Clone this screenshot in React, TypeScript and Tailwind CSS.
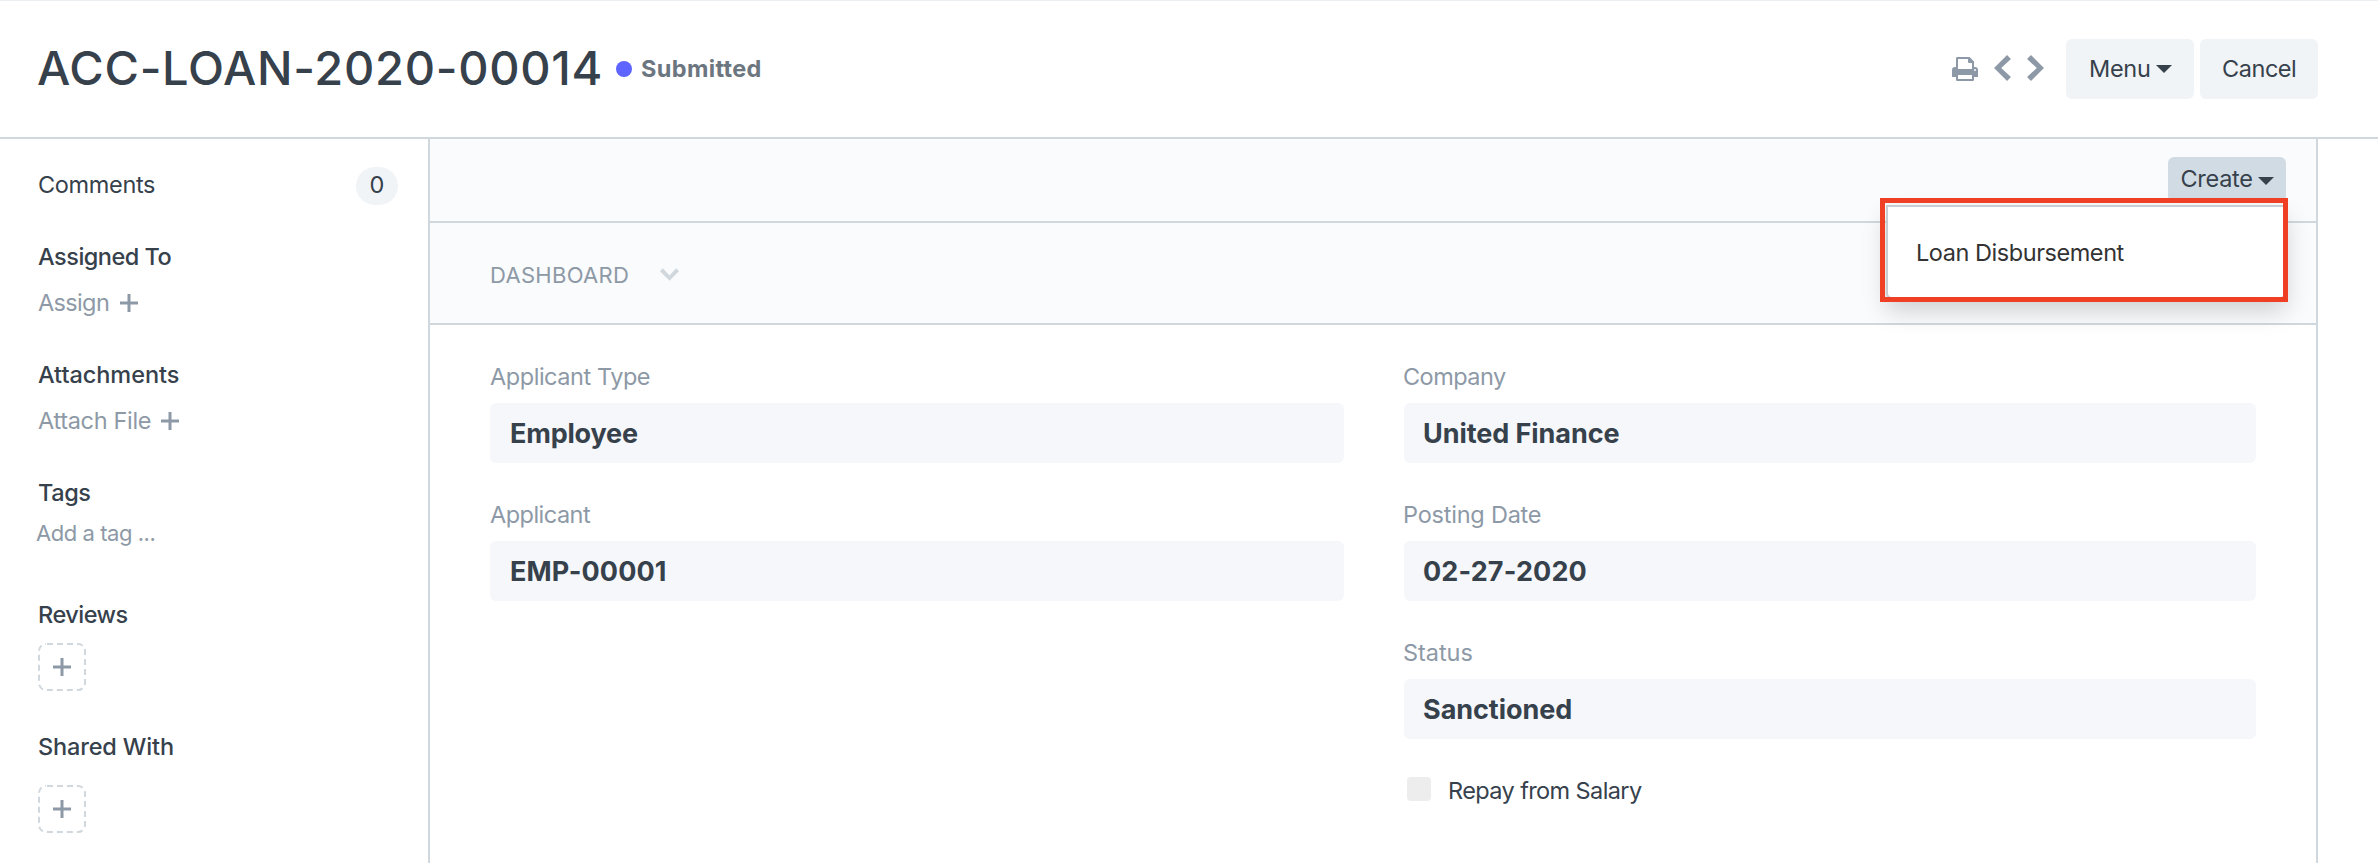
import type { ReactNode } from "react";

function Caret({ className = "" }: { className?: string }) {
  return (
    <svg className={`shrink-0 ${className}`} width="16" height="8" viewBox="0 0 16 8" fill="currentColor">
      <path d="M0 0h16L8 8z" />
    </svg>
  );
}

function Plus({ className = "" }: { className?: string }) {
  return (
    <svg className={`shrink-0 text-[#8d99a6] ${className}`} width="18" height="18" viewBox="0 0 18 18" fill="currentColor">
      <path d="M7.5 0h3v7.5H18v3h-7.5V18h-3v-7.5H0v-3h7.5z" />
    </svg>
  );
}

function PrintIcon() {
  return (
    <svg width="26" height="24" viewBox="0 0 26 24" fill="currentColor">
      <path
        fillRule="evenodd"
        d="M5.2 0H17.6L22 4.4V10h1a3 3 0 0 1 3 3v6.4a.6.6 0 0 1-.6.6H22v2.8A1.2 1.2 0 0 1 20.8 24H5.2A1.2 1.2 0 0 1 4 22.8V20H.6a.6.6 0 0 1-.6-.6V13a3 3 0 0 1 3-3h1V1.2A1.2 1.2 0 0 1 5.2 0zM6 2v10h14V6h-2.8A1.2 1.2 0 0 1 16 4.8V2zM6 18v4h14v-4zM23 12a1 1 0 1 0 0 2a1 1 0 1 0 0-2z"
      />
    </svg>
  );
}

function SideHeading({ children, className = "" }: { children: ReactNode; className?: string }) {
  return <h2 className={`text-[23.5px] leading-[29px] font-medium text-[#36414c] ${className}`}>{children}</h2>;
}

function AddBox({ className = "" }: { className?: string }) {
  return (
    <button className={`flex size-12 items-center justify-center ${className}`}>
      <svg width="48" height="48" viewBox="0 0 48 48" fill="none">
        <rect x="1" y="1" width="46" height="46" rx="7" stroke="#d1d8dd" strokeWidth="2" strokeDasharray="6 4" strokeDashoffset="-1" />
        <path d="M22.5 15h3v7.5H33v3h-7.5V33h-3v-7.5H15v-3h7.5z" fill="#8d99a6" />
      </svg>
    </button>
  );
}

function Field({ label, value, labelClass, valueClass }: { label: string; value: string; labelClass: string; valueClass: string }) {
  return (
    <div className="mb-[37px]">
      <div className={`text-[23.5px] leading-[29px] text-[#8d99a6] ${labelClass}`}>{label}</div>
      <div className="mt-3 h-[60px] rounded-md bg-[#f5f7fa] px-5 pt-[14px]">
        <div className={`text-[27px] leading-[33px] font-bold text-[#36414c] ${valueClass}`}>{value}</div>
      </div>
    </div>
  );
}

function Header() {
  return (
    <header className="flex h-[139px] items-start justify-between border-t border-b-2 border-t-[#ebeff2] border-b-[#d1d8dd] pr-[60px] pl-[37px]">
      <div className="flex items-start">
        <h1 className="mt-[38px] w-[579px] text-[47px] leading-[57px] font-medium tracking-[0.7px] whitespace-nowrap">ACC-LOAN-2020-00014</h1>
        <span className="mt-[60px] size-4 rounded-full bg-[#5e64ff]" />
        <span className="mt-[53px] ml-[9px] text-[23.5px] leading-[29px] font-bold tracking-[0.35px] text-[#6c7680]">Submitted</span>
      </div>
      <div className="flex items-start">
        <div className="flex items-start text-[#8d99a6]">
          <div className="mt-14">
            <PrintIcon />
          </div>
          <svg className="mt-[54px] ml-4" width="17" height="26" viewBox="0.5 3 6.5 10" fill="currentColor">
            <path d="M5.5 3L7 4.5 3.25 8 7 11.5 5.5 13l-5-5 5-5z" />
          </svg>
          <svg className="mt-[54px] ml-4" width="17" height="26" viewBox="1 3 6.5 10" fill="currentColor">
            <path d="M7.5 8l-5 5L1 11.5 4.75 8 1 4.5 2.5 3l5 5z" />
          </svg>
        </div>
        <button className="mt-[38px] ml-[22px] flex h-[60px] w-32 items-start justify-between rounded-md bg-[#f0f4f7] pr-[22px] pl-[23px]">
          <span className="mt-[15px] text-[23.5px] leading-[29px] tracking-[-0.3px]">Menu</span>
          <Caret className="mt-[26px]" />
        </button>
        <button className="mt-[38px] ml-1.5 flex h-[60px] w-[118px] items-start rounded-md bg-[#f0f4f7] pl-[22px]">
          <span className="mt-[15px] text-[23.5px] leading-[29px] tracking-[-0.45px]">Cancel</span>
        </button>
      </div>
    </header>
  );
}

function Sidebar() {
  return (
    <aside className="w-[430px] shrink-0 border-r-2 border-[#d1d8dd] pt-7 pr-[30px] pl-[38px]">
      <div className="flex h-[38px] items-start justify-between">
        <span className="mt-[3px] text-[23.5px] leading-[29px] tracking-[-0.35px]">Comments</span>
        <span className="h-[38px] w-[42px] rounded-full bg-[#f0f4f7] pt-[3px] text-center text-[23.5px] leading-[29px]">0</span>
      </div>
      <SideHeading className="mt-[37px] tracking-[-0.5px]">Assigned To</SideHeading>
      <div className="mt-[17px] flex items-start">
        <span className="w-[82px] text-[23.5px] leading-[29px] tracking-[-0.65px] text-[#8d99a6]">Assign</span>
        <Plus className="mt-[6px]" />
      </div>
      <SideHeading className="mt-[43px] tracking-[-0.05px]">Attachments</SideHeading>
      <div className="mt-[17px] flex items-start">
        <span className="w-[123px] text-[23.5px] leading-[29px] tracking-[-0.33px] text-[#8d99a6]">Attach File</span>
        <Plus className="mt-[6px]" />
      </div>
      <SideHeading className="mt-[43px] tracking-[-0.4px]">Tags</SideHeading>
      <div className="mt-[13px] -ml-[2px] text-[22px] leading-[26px] tracking-[-0.45px] text-[#8d99a6]">Add a tag ...</div>
      <SideHeading className="mt-[54px] tracking-[-0.5px]">Reviews</SideHeading>
      <AddBox className="mt-[14px]" />
      <SideHeading className="mt-[41px] tracking-[-0.15px]">Shared With</SideHeading>
      <AddBox className="mt-6" />
    </aside>
  );
}

function CreateMenu() {
  return (
    <div className="relative">
      <button className="flex h-[45px] w-[118px] items-start justify-between rounded-md bg-[#d1dbe4] pr-3 pl-[12.5px]">
        <span className="mt-[7px] text-[23.5px] leading-[29px] tracking-[-0.3px]">Create</span>
        <Caret className="mt-5" />
      </button>
      <div className="absolute top-12 right-0 z-10 h-[94px] w-[400px] rounded-b-md border-2 border-[#c7cdd1] bg-white pt-[31px] pl-[28px] shadow-[0_12px_24px_rgba(0,0,0,0.175)]">
        <span className="block text-[23.5px] leading-[29px] tracking-[-0.45px] text-[#333]">Loan Disbursement</span>
      </div>
      <div className="absolute top-[41px] -right-[2px] z-20 h-[104px] w-[408px] border-5 border-[#ef4026]" />
    </div>
  );
}

export default function App() {
  return (
    <div className="flex h-[863px] w-full flex-col overflow-hidden bg-white font-['Inter','Liberation_Sans',sans-serif] text-[#36414c]">
      <Header />
      <div className="flex min-h-0 flex-1">
        <Sidebar />
        <main className="w-[1888px] shrink-0 border-r-2 border-[#d1d8dd]">
          <div className="flex h-[84px] items-start justify-end border-b-2 border-[#d1d8dd] bg-[#fafbfc] pt-[18px] pr-[30px]">
            <CreateMenu />
          </div>
          <div className="flex h-[102px] items-start border-b-2 border-[#d1d8dd] bg-[#fafbfc] pl-[60px]">
            <span className="mt-[39px] w-[170px] text-[22px] leading-[26px] tracking-[0.3px] text-[#8d99a6]">DASHBOARD</span>
            <svg className="mt-[45px] text-[#d1d8dd]" width="19" height="13" viewBox="0 4.5 10 6.5" fill="currentColor">
              <path d="M5 11L0 6l1.5-1.5L5 8.25 8.5 4.5 10 6l-5 5z" />
            </svg>
          </div>
          <div className="grid grid-cols-[854px_852px] gap-x-[60px] pt-[37px] pl-[60px]">
            <div>
              <Field label="Applicant Type" value="Employee" labelClass="tracking-[-0.45px]" valueClass="tracking-[-0.2px]" />
              <Field label="Applicant" value="EMP-00001" labelClass="tracking-[-0.52px]" valueClass="tracking-[0.1px]" />
            </div>
            <div>
              <Field label="Company" value="United Finance" labelClass="-ml-px tracking-[-0.55px]" valueClass="-ml-px tracking-[-0.07px]" />
              <Field label="Posting Date" value="02-27-2020" labelClass="-ml-px tracking-[-0.22px]" valueClass="-ml-px tracking-[0.15px]" />
              <Field label="Status" value="Sanctioned" labelClass="-ml-px tracking-[-0.05px]" valueClass="-ml-px tracking-[-0.05px]" />
              <label className="flex items-start pl-[3px]">
                <span className="mt-px size-6 rounded bg-[#ededed]" />
                <span className="ml-[17px] text-[23.5px] leading-[29px] tracking-[-0.6px]">Repay from Salary</span>
              </label>
            </div>
          </div>
        </main>
      </div>
    </div>
  );
}
